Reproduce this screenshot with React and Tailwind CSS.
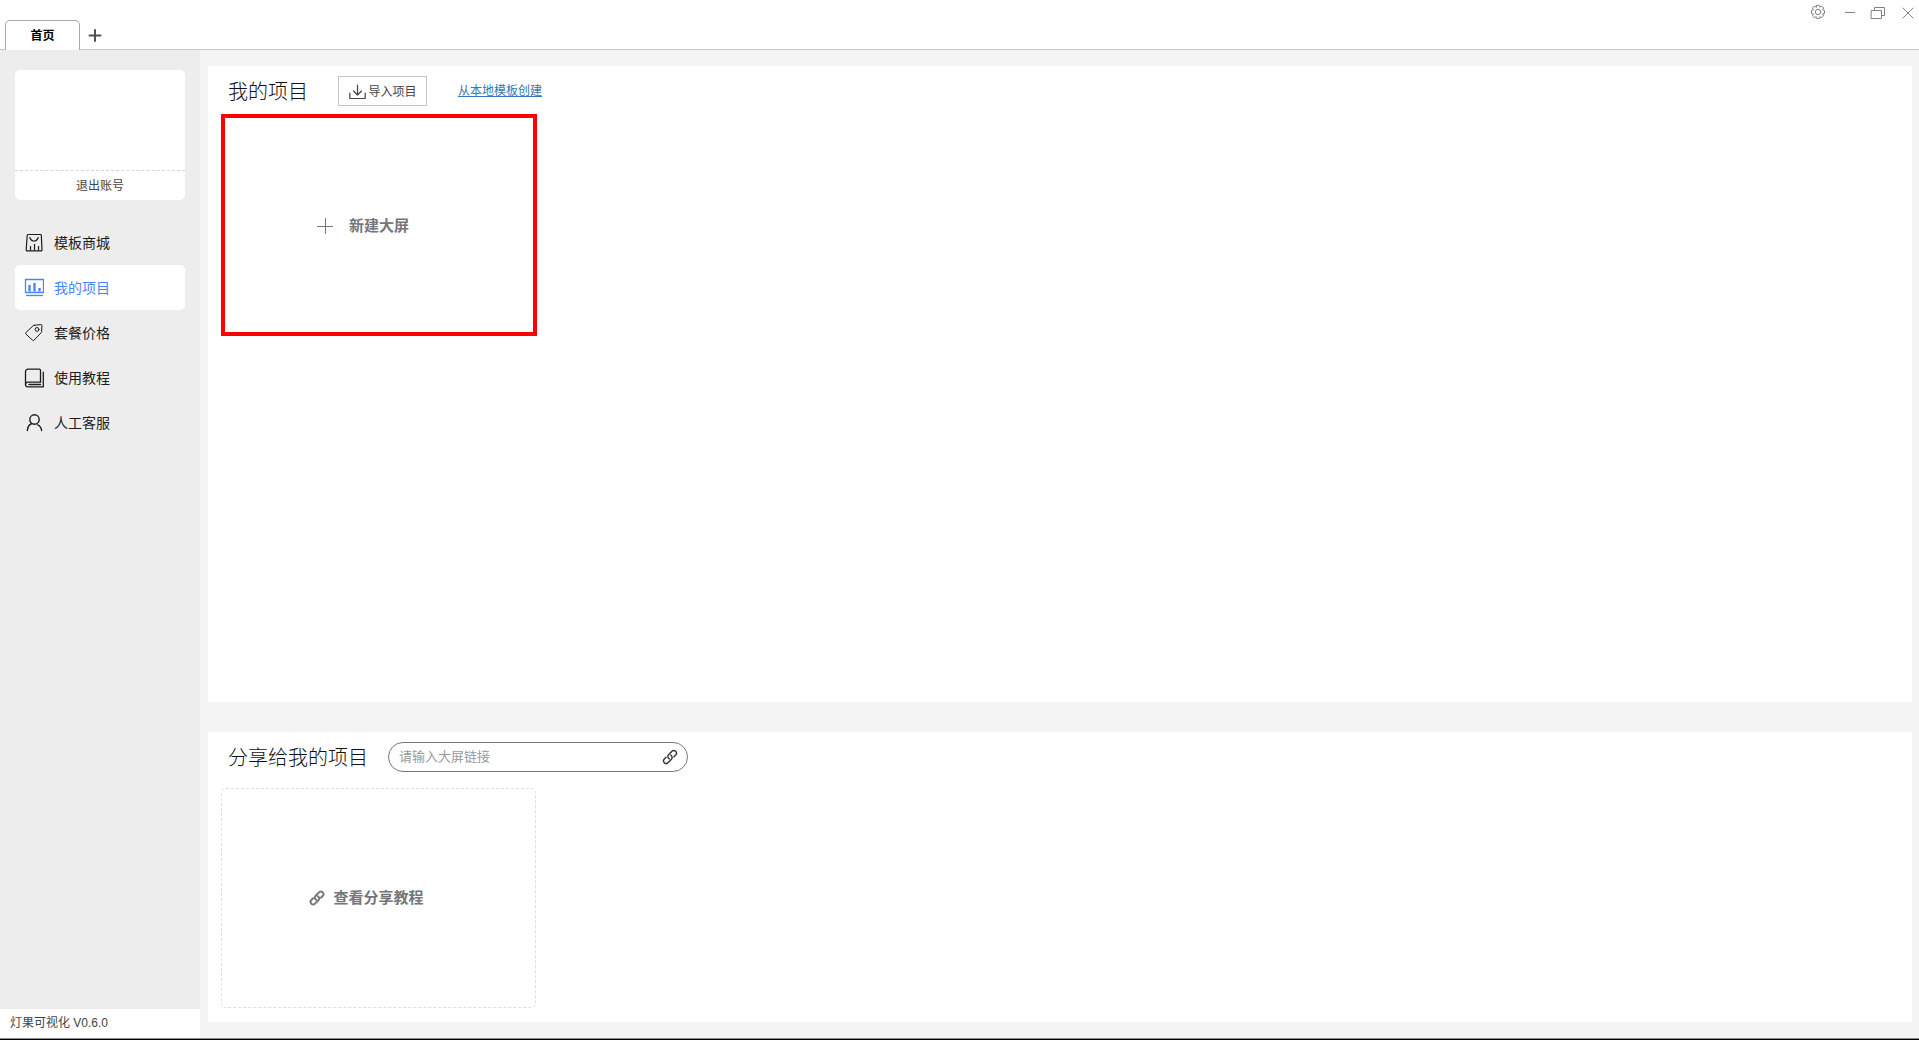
import React from "react";

function Icon({ size = 20, stroke = 1, className = "", children }) {
  return (
    <svg
      width={size}
      height={size}
      viewBox={`0 0 ${size} ${size}`}
      fill="none"
      stroke="currentColor"
      strokeWidth={stroke}
      strokeLinecap="round"
      strokeLinejoin="round"
      className={`shrink-0 ${className}`}
      aria-hidden="true"
    >
      {children}
    </svg>
  );
}

const StoreIcon = () => (
  <Icon stroke={1.2}>
    <path d="M4 1.500h12.500a.8.8 0 0 1 .8.700L18 16.700a1 1 0 0 1-1 1.100H3.200a1 1 0 0 1-1-1.100L3.200 2.200a.8.8 0 0 1 .8-.7z" />
    <path d="M5.800 4.500C6.700 7 8.200 8 10 8s3.400-1 4.200-3.500" />
    <path d="M6.500 13v4.500M10.500 11v6.500M14.500 13v4.500" strokeLinecap="butt" />
  </Icon>
);

const ScreenIcon = () => (
  <Icon stroke={1.3}>
    <path d="M1.500 1.500h18v13h-18z" strokeLinejoin="miter" />
    <path d="M5.500 7v6.500M10.500 5v8.500M15.500 10v3.500" strokeWidth="2.400" strokeLinecap="butt" />
    <path d="M2 17.500h17" strokeLinecap="butt" />
  </Icon>
);

const TagIcon = () => (
  <Icon>
    <path d="M10.200 2.300l6.600-.7a1 1 0 0 1 1.100 1.100l-.3 6.100a1.500 1.500 0 0 1-.5 1l-7 7.300a1.200 1.200 0 0 1-1.700 0L2 11.100a1.200 1.200 0 0 1 0-1.700l7-6.500a2 2 0 0 1 1.200-.6z" />
    <circle cx="13" cy="6.400" r="1.900" />
  </Icon>
);

const BookIcon = () => (
  <Icon stroke={1.3}>
    <path d="M16.500 14V2.300a1.200 1.200 0 0 0-1.200-1.200H4.100a2.600 2.600 0 0 0-2.600 2.600v12.800a2.300 2.300 0 0 0 2.300 2.300h15.500V4.200" />
    <path d="M1.500 16.300a2.200 2.200 0 0 1 2.300-2.200h12.700M5 16.500h11.500" />
  </Icon>
);

const PersonIcon = () => (
  <Icon stroke={1.4}>
    <circle cx="10.500" cy="6.500" r="4.700" />
    <path d="M3.400 17.500c.2-3.500 1.700-5.900 4.400-7M13.700 11.900c2.200 1 3.600 3 3.900 5.600" />
  </Icon>
);

const GearIcon = () => (
  <Icon size={16}>
    <path d="M6.700 1.300h2.600l.5 1.800 1.900-1 1.900 1.900-1 1.900 1.900.6v2.800l-1.900.6 1 1.900-1.900 1.900-1.900-1-.5 1.900H6.700l-.5-1.900-1.900 1-1.900-1.900 1-1.900-1.900-.6V6.500l1.900-.6-1-1.900 1.900-1.900 1.900 1z" />
    <circle cx="8" cy="7.900" r="2.700" />
  </Icon>
);

const ImportIcon = () => (
  <Icon stroke={1.2}>
    <path d="M9.500 3v10M5.500 9l4 4 4-4" />
    <path d="M1.800 11v5.500h15.400V11" />
  </Icon>
);

const ChainIcon = ({ stroke }) => (
  <Icon size={16} stroke={stroke}>
    <g transform="translate(8 8) rotate(-45)">
      <path d="M3 2.600H5.400a2.600 2.600 0 0 0 0-5.200H0.600a2.600 2.600 0 0 0-2.400 3.400" />
      <path d="M-3-2.600H-5.400a2.600 2.600 0 0 0 0 5.200H-0.600a2.600 2.600 0 0 0 2.400-3.400" />
    </g>
  </Icon>
);

const menu = [
  { label: "模板商城", Glyph: StoreIcon },
  { label: "我的项目", Glyph: ScreenIcon, active: true },
  { label: "套餐价格", Glyph: TagIcon },
  { label: "使用教程", Glyph: BookIcon },
  { label: "人工客服", Glyph: PersonIcon },
];

function TitleBar() {
  return (
    <header className="flex h-[50px] shrink-0 items-end justify-between bg-white">
      <div className="flex h-full flex-1 items-end">
        <div className="w-[5px] border-b border-[#c8c8c8]" />
        <button className="h-[30px] w-[75px] rounded-t-[5px] border border-b-0 border-[#a9a9a9] text-xs font-bold text-black">
          首页
        </button>
        <div className="flex h-[30px] flex-1 items-center border-b border-[#c8c8c8] pl-2">
          <button aria-label="新建标签" className="text-[#505050]">
            <Icon size={14} stroke={2}>
              <path d="M7 2v11M1.500 7.500h11" />
            </Icon>
          </button>
        </div>
      </div>
      <div className="flex h-full items-start border-b border-[#c8c8c8] pt-1 pr-[5px] text-[#808080]">
        <button aria-label="设置" className="mr-4">
          <GearIcon />
        </button>
        <button aria-label="最小化" className="mr-3">
          <Icon size={16}>
            <path d="M3 8.500h10" strokeLinecap="butt" />
          </Icon>
        </button>
        <button aria-label="还原" className="mr-4">
          <Icon size={16}>
            <path d="M4.500 6V3.500h10v8H11.500M1.500 6.500h10v8h-10z" strokeLinejoin="miter" />
          </Icon>
        </button>
        <button aria-label="关闭">
          <Icon size={12} className="my-[3px]">
            <path d="M1 1l10 10M11 1l-10 10" />
          </Icon>
        </button>
      </div>
    </header>
  );
}

function Sidebar() {
  return (
    <aside className="flex w-[200px] shrink-0 flex-col bg-[#ededed]">
      <section className="mx-[15px] mt-5 flex flex-col rounded-[5px] bg-white">
        <div className="h-[100px]" />
        <button className="h-[30px] border-t border-dashed border-[#d6d6d6] text-xs text-[#444]">
          退出账号
        </button>
      </section>
      <nav className="mx-[15px] mt-5 flex flex-col">
        {menu.map(({ label, Glyph, active }) => (
          <a
            key={label}
            href="#"
            className={`flex h-[45px] items-center gap-[10px] rounded-[5px] pl-[9px] text-sm ${
              active ? "bg-white text-[#4a86fb]" : "text-[#1c1c1c]"
            }`}
          >
            <Glyph />
            {label}
          </a>
        ))}
      </nav>
      <footer className="mt-auto flex h-[29px] items-center bg-white pb-0.5 pl-[10px] text-xs text-[#444]">
        灯果可视化 V0.6.0
      </footer>
    </aside>
  );
}

export default function App() {
  return (
    <div className="flex h-screen flex-col border-b border-black bg-[#f4f4f4] [font-family:'Liberation_Sans','Noto_Sans_CJK_SC',sans-serif]">
      <TitleBar />
      <div className="flex min-h-0 flex-1 border-b border-[#8c8c8c]">
        <Sidebar />
        <main className="flex min-w-0 flex-1 flex-col gap-[30px] py-4 pr-[7px] pl-2">
          <section className="flex-1 bg-white px-[13px] pt-[10px]">
            <div className="flex h-[30px] items-center pl-[7px]">
              <h1 className="pt-0.5 text-xl font-light text-[#111]">我的项目</h1>
              <button className="ml-[30px] flex h-[30px] w-[89px] items-center justify-center border border-[#c4c4c4] pt-0.5 text-xs text-[#444]">
                <ImportIcon />
                导入项目
              </button>
              <a href="#" className="ml-[31px] text-xs text-[#337ab7] underline">
                从本地模板创建
              </a>
            </div>
            <button className="mt-2 flex h-[222px] w-[316px] items-center justify-center gap-4 border-4 border-[#ff0000] pt-0.5 pr-8 text-[15px] font-bold text-[#75757a]">
              <Icon size={16}>
                <path d="M8.500 0v16M0 8.500h16" strokeLinecap="butt" />
              </Icon>
              新建大屏
            </button>
          </section>
          <section className="bg-white px-[13px] pt-[10px] pb-[14px]">
            <div className="flex h-[30px] items-center pl-[7px]">
              <h2 className="pt-0.5 text-xl font-light text-[#111]">分享给我的项目</h2>
              <div className="ml-5 flex h-[30px] w-[300px] items-center rounded-full border border-[#777] pr-[9px] pl-[10px]">
                <input
                  type="text"
                  aria-label="大屏链接"
                  placeholder="请输入大屏链接"
                  className="min-w-0 flex-1 text-[13px] outline-none placeholder:text-[#999]"
                />
                <button aria-label="打开链接" className="text-[#333]">
                  <ChainIcon stroke={1.4} />
                </button>
              </div>
            </div>
            <button className="mt-4 flex h-[220px] w-[315px] items-center justify-center gap-2 rounded-[5px] border border-dashed border-[#dedede] pr-6 text-[15px] font-bold text-[#75757a]">
              <ChainIcon stroke={1.9} />
              查看分享教程
            </button>
          </section>
        </main>
      </div>
    </div>
  );
}
